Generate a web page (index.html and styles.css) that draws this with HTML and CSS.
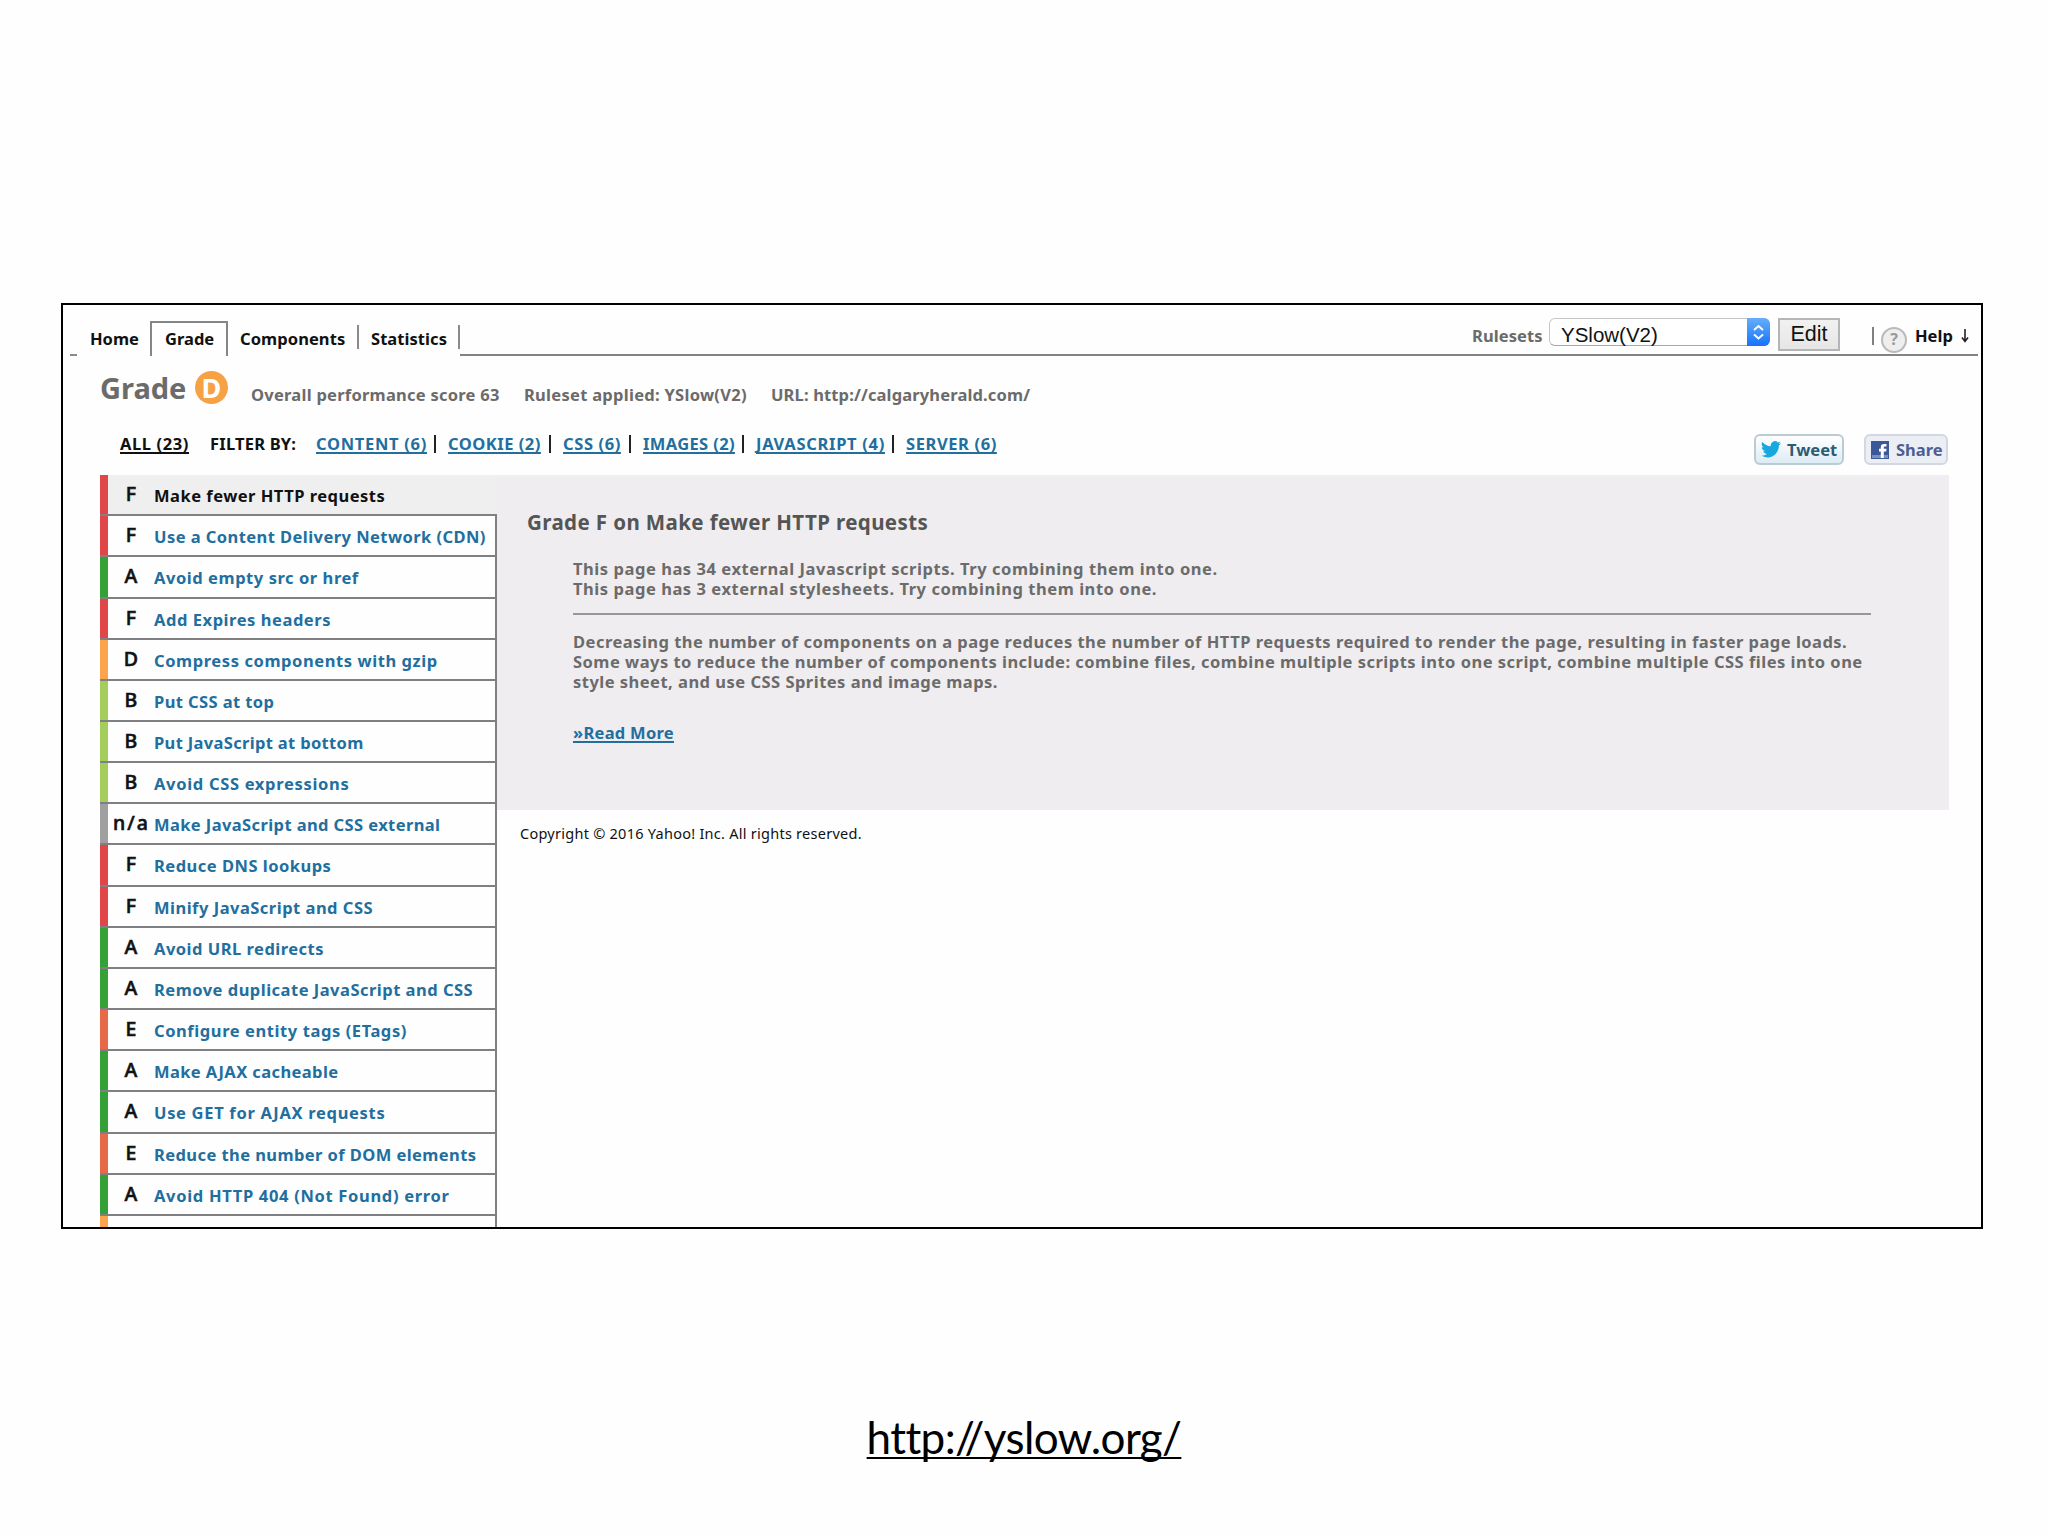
FILE: index.html
```html
<!DOCTYPE html>
<html lang="en">
<head>
<meta charset="utf-8">
<title>YSlow</title>
<link rel="stylesheet" href="styles.css">
</head>
<body>
<main class="frame">
  <header class="toolbar">
    <span class="dash"></span>
    <nav class="tabs">
      <a class="tab home">Home</a>
      <a class="tab active">Grade</a>
      <a class="tab components">Components</a>
      <a class="tab statistics">Statistics</a>
    </nav>
    <div class="controls">
      <span class="rulesets">Rulesets</span>
      <div class="select"><span class="value">YSlow(V2)</span>
        <span class="stepper"><svg viewBox="0 0 23 28" width="23" height="28"><path d="M7 12 11.500 8 16 12M7 16.500 11.500 20.500 16 16.500"/></svg></span>
      </div>
      <button class="edit">Edit</button>
      <span class="bar"></span>
      <span class="qmark">?</span>
      <span class="help">Help</span>
      <svg class="down" viewBox="0 0 8 14" width="8" height="14"><path d="M4 0V12M1 8.500 4 12.500 7 8.500"/></svg>
    </div>
  </header>

  <section class="summary">
    <h1>Grade</h1>
    <span class="badge">D</span>
    <span class="fact score">Overall performance score 63</span>
    <span class="fact applied">Ruleset applied: YSlow(V2)</span>
    <span class="fact url">URL: http://calgaryherald.com/</span>
  </section>

  <section class="filters">
    <span class="all"><a>ALL (23)</a></span>
    <span class="by">FILTER BY:</span>
    <span class="cell content"><a>CONTENT (6)</a></span>
    <span class="cell cookie"><a>COOKIE (2)</a></span>
    <span class="cell css"><a>CSS (6)</a></span>
    <span class="cell images"><a>IMAGES (2)</a></span>
    <span class="cell js"><a>JAVASCRIPT (4)</a></span>
    <span class="cell server"><a>SERVER (6)</a></span>
    <div class="social">
      <a class="tweet"><svg viewBox="0 0 24 20" width="20" height="17"><path d="M24 2.400a9.800 9.800 0 0 1-2.800.8A4.900 4.900 0 0 0 23.300.400a9.900 9.900 0 0 1-3.100 1.200A4.900 4.900 0 0 0 11.800 6 14 14 0 0 1 1.700.900a4.900 4.900 0 0 0 1.500 6.600A4.900 4.900 0 0 1 1 6.900a4.900 4.900 0 0 0 3.900 4.900 4.900 4.900 0 0 1-2.200.1 4.900 4.900 0 0 0 4.600 3.400A9.900 9.900 0 0 1 0 17.300 13.900 13.900 0 0 0 7.500 19.500C16.600 19.500 21.600 12 21.500 4.900A10 10 0 0 0 24 2.400z"/></svg>Tweet</a>
      <a class="share"><svg viewBox="0 0 18 18" width="18" height="18"><rect width="18" height="18" fill="#3b5998"/><rect x="1" y="14" width="16" height="3" fill="#7d90bd"/><path d="M9.800 17V10.500H8V7.800H9.800V6C9.800 4 11 2.900 13 2.900H15.500V5.500H14C13.200 5.500 12.800 5.900 12.800 6.600V7.800H15.500L15.200 10.500H12.800V17Z" fill="#fff"/></svg>Share</a>
    </div>
  </section>

  <section class="report">
    <ul class="rules">
      <li class="f selected"><b>F</b><a>Make fewer HTTP requests</a></li>
      <li class="f"><b>F</b><a>Use a Content Delivery Network (CDN)</a></li>
      <li class="a"><b>A</b><a>Avoid empty src or href</a></li>
      <li class="f"><b>F</b><a>Add Expires headers</a></li>
      <li class="d"><b>D</b><a>Compress components with gzip</a></li>
      <li class="b"><b>B</b><a>Put CSS at top</a></li>
      <li class="b"><b>B</b><a>Put JavaScript at bottom</a></li>
      <li class="b"><b>B</b><a>Avoid CSS expressions</a></li>
      <li class="na"><b>n/a</b><a>Make JavaScript and CSS external</a></li>
      <li class="f"><b>F</b><a>Reduce DNS lookups</a></li>
      <li class="f"><b>F</b><a>Minify JavaScript and CSS</a></li>
      <li class="a"><b>A</b><a>Avoid URL redirects</a></li>
      <li class="a"><b>A</b><a>Remove duplicate JavaScript and CSS</a></li>
      <li class="e"><b>E</b><a>Configure entity tags (ETags)</a></li>
      <li class="a"><b>A</b><a>Make AJAX cacheable</a></li>
      <li class="a"><b>A</b><a>Use GET for AJAX requests</a></li>
      <li class="e"><b>E</b><a>Reduce the number of DOM elements</a></li>
      <li class="a"><b>A</b><a>Avoid HTTP 404 (Not Found) error</a></li>
      <li class="d"></li>
    </ul>
    <div class="detail">
      <article class="panel">
        <h2>Grade F on Make fewer HTTP requests</h2>
        <div class="body">
          <p class="findings">This page has 34 external Javascript scripts. Try combining them into one.<br>This page has 3 external stylesheets. Try combining them into one.</p>
          <hr>
          <p>Decreasing the number of components on a page reduces the number of HTTP requests required to render the page, resulting in faster page loads.<br>Some ways to reduce the number of components include: combine files, combine multiple scripts into one script, combine multiple CSS files into one<br>style sheet, and use CSS Sprites and image maps.</p>
          <a class="more">»Read More</a>
        </div>
      </article>
      <footer>Copyright © 2016 Yahoo! Inc. All rights reserved.</footer>
    </div>
  </section>
</main>
<a class="caption">http://yslow.org/</a>
</body>
</html>
```
FILE: styles.css
```css
* { box-sizing: border-box; }

body {
  margin: 0;
  width: 2048px;
  height: 1536px;
  overflow: hidden;
  background: #fefefe;
  color: #111;
  font: bold 16.5px/20px "Noto Sans", "Open Sans", sans-serif;
}

h1, h2, p, ul { margin: 0; padding: 0; }
span, a, p { white-space: nowrap; }

.frame {
  width: 1922px;
  height: 926px;
  margin: 303px 0 0 61px;
  border: 2px solid #000;
  overflow: hidden;
}

/* Toolbar */
.toolbar {
  display: flex;
  align-items: flex-end;
  height: 51px;
  padding: 0 3px 0 7px;
}
.dash { width: 7px; height: 2px; background: #8a8a8c; }
.tabs { display: flex; height: 35px; }
.tab { height: 24px; margin-top: 4px; line-height: 27px; }
.home { width: 73px; padding-left: 13px; }
.active {
  width: 78px;
  height: 35px;
  margin-top: 0;
  padding: 2px 0 0 13px;
  border: solid #858589;
  border-width: 2px 2px 0;
}
.components { width: 131px; padding-left: 12px; border-right: 2px solid #8a8a8c; letter-spacing: .08px; }
.statistics { width: 101px; padding-left: 12px; border-right: 2px solid #8a8a8c; letter-spacing: .06px; }
.controls {
  display: flex;
  flex: 1;
  justify-content: flex-end;
  height: 39px;
  padding-right: 9px;
  border-bottom: 2px solid #838386;
}
.rulesets { width: 77px; color: #6b6b6b; line-height: 37px; letter-spacing: .1px; }
.select {
  display: flex;
  justify-content: space-between;
  width: 221px;
  height: 28px;
  margin-top: 1px;
  padding-left: 11px;
  border: 1px solid #c6c6c8;
  border-bottom-color: #a8a8aa;
  border-radius: 6px;
  background: #fff;
}
.value, .edit { font: 20.5px/31px "Liberation Sans", Arial, sans-serif; color: #111; }
.stepper {
  width: 23px;
  height: 28px;
  margin: -1px -1px 0 0;
  border-radius: 0 6px 6px 0;
  background: linear-gradient(#66aefc, #1673fb);
}
.stepper svg { display: block; fill: none; stroke: #fff; stroke-width: 2; }
.edit {
  width: 62px;
  height: 33px;
  margin: 1px 0 0 8px;
  padding: 0;
  border: 2px solid #b5b5b7;
  background: linear-gradient(#f1f1f1, #e6e6e6);
  font-size: 21.5px;
  line-height: 29px;
}
.bar { width: 2px; height: 18px; margin: 10px 7px 0 32px; background: #808083; }
.qmark {
  width: 26px;
  height: 26px;
  margin-top: 10px;
  border: 2px solid #b9b9b9;
  border-radius: 50%;
  background: #eee;
  color: #999;
  font-size: 16px;
  line-height: 20px;
  text-align: center;
}
.help { width: 40px; margin: 0 6px 0 8px; line-height: 38px; }
.down { margin-top: 12px; fill: none; stroke: #222; stroke-width: 1.6; }

/* Grade summary */
.summary { display: flex; height: 66px; padding: 12px 0 0 37px; color: #6b6b6b; }
h1 { width: 95px; font-size: 29px; line-height: 39px; }
.badge {
  width: 33px;
  height: 33px;
  margin: 3px 23px 0 0;
  border-radius: 50%;
  background: #f7a145;
  color: #fff;
  font-size: 27px;
  line-height: 33px;
  text-align: center;
}
.fact { line-height: 54px; }
.score { width: 273px; letter-spacing: .25px; }
.applied { width: 247px; letter-spacing: .28px; }
.url { letter-spacing: .14px; }

/* Category filters */
.filters { display: flex; height: 53px; padding: 13px 33px 0 57px; line-height: 18px; letter-spacing: .6px; }
.all { width: 90px; }
.by { width: 106px; letter-spacing: .2px; }
.all a, .cell a, .more {
  text-decoration: underline;
  text-decoration-thickness: 2px;
  text-underline-offset: 2px;
  text-decoration-skip-ink: none;
}
.cell { height: 18px; margin-right: 12px; border-right: 2px solid #222; }
.cell a, .more, .rules a { color: #226f9f; }
.content { width: 120px; letter-spacing: .7px; }
.cookie { width: 103px; letter-spacing: .5px; }
.css { width: 68px; }
.images { width: 101px; letter-spacing: .37px; }
.js { width: 138px; letter-spacing: .69px; }
.server { border: 0; }
.social { display: flex; gap: 20px; margin: -1px 0 0 auto; letter-spacing: 0; }
.tweet, .share {
  display: flex;
  align-items: center;
  height: 31px;
  border: 2px solid #bccbd2;
  border-radius: 6px;
}
.tweet { width: 90px; gap: 6px; padding-left: 5px; background: linear-gradient(#fff, #dcecf4); color: #2d5d74; }
.tweet svg { fill: #17a8e0; }
.share { width: 84px; gap: 7px; padding-left: 5px; border-color: #d3d7e4; background: #eceef5; color: #4c5e94; }

/* Rule list and detail panel */
.report { display: flex; padding: 0 32px 0 37px; }
.rules { width: 397px; list-style: none; letter-spacing: .49px; }
.rules li {
  display: flex;
  height: 41.16px;
  border: solid #808082;
  border-width: 2px 2px 0 0;
  line-height: 41px;
}
.rules li::before { content: ""; width: 8px; background: var(--grade); }
.rules .selected { height: 39.2px; border: 0; background: #efeff0; line-height: 42px; }
.rules .selected a { color: #111; }
.rules b {
  width: 46px;
  font-size: 19.5px;
  font-weight: 500;
  line-height: 38px;
  letter-spacing: 0;
  text-align: center;
  -webkit-text-stroke: .6px #111;
}
.rules .na b { padding-left: 5px; text-align: left; letter-spacing: 2px; }
/* Tracking per rule name */
.rules li:nth-child(2) { letter-spacing: .44px; }
.rules li:nth-child(3), .rules li:nth-child(4) { letter-spacing: .55px; }
.rules li:nth-child(5), .rules li:nth-child(14) { letter-spacing: .58px; }
.rules li:nth-child(6), .rules li:nth-child(9), .rules li:nth-child(15) { letter-spacing: .4px; }
.rules li:nth-child(7) { letter-spacing: .33px; }
.rules li:nth-child(8), .rules li:nth-child(16), .rules li:nth-child(18) { letter-spacing: .68px; }
.rules li:nth-child(17) { letter-spacing: .42px; }
.a { --grade: #35a035; }
.b { --grade: #a4cd5c; }
.d { --grade: #fba44c; }
.e { --grade: #e66a48; }
.f { --grade: #e04548; }
.na { --grade: #a0a0a0; }
.detail { flex: 1; }
.panel { height: 335px; padding: 32px 78px 0 30px; background: #efedef; color: #6b6b6b; }
h2 { font-size: 20.5px; line-height: 30px; letter-spacing: .4px; color: #555; }
.body { padding: 22px 0 0 46px; letter-spacing: .482px; }
.findings { letter-spacing: .55px; }
hr { height: 2px; margin: 14px 0 17px; border: 0; background: #98989a; }
.more { display: inline-block; margin-top: 31px; letter-spacing: .28px; }
footer { padding: 13px 0 0 23px; font-size: 14.5px; font-weight: 400; letter-spacing: .26px; }

.caption {
  display: block;
  margin-top: 178px;
  font: 44px/60px Lato, sans-serif;
  letter-spacing: -.6px;
  color: #000;
  text-align: center;
  text-decoration: underline;
  text-decoration-thickness: 2px;
  text-underline-offset: 3px;
  text-decoration-skip-ink: none;
}
```
